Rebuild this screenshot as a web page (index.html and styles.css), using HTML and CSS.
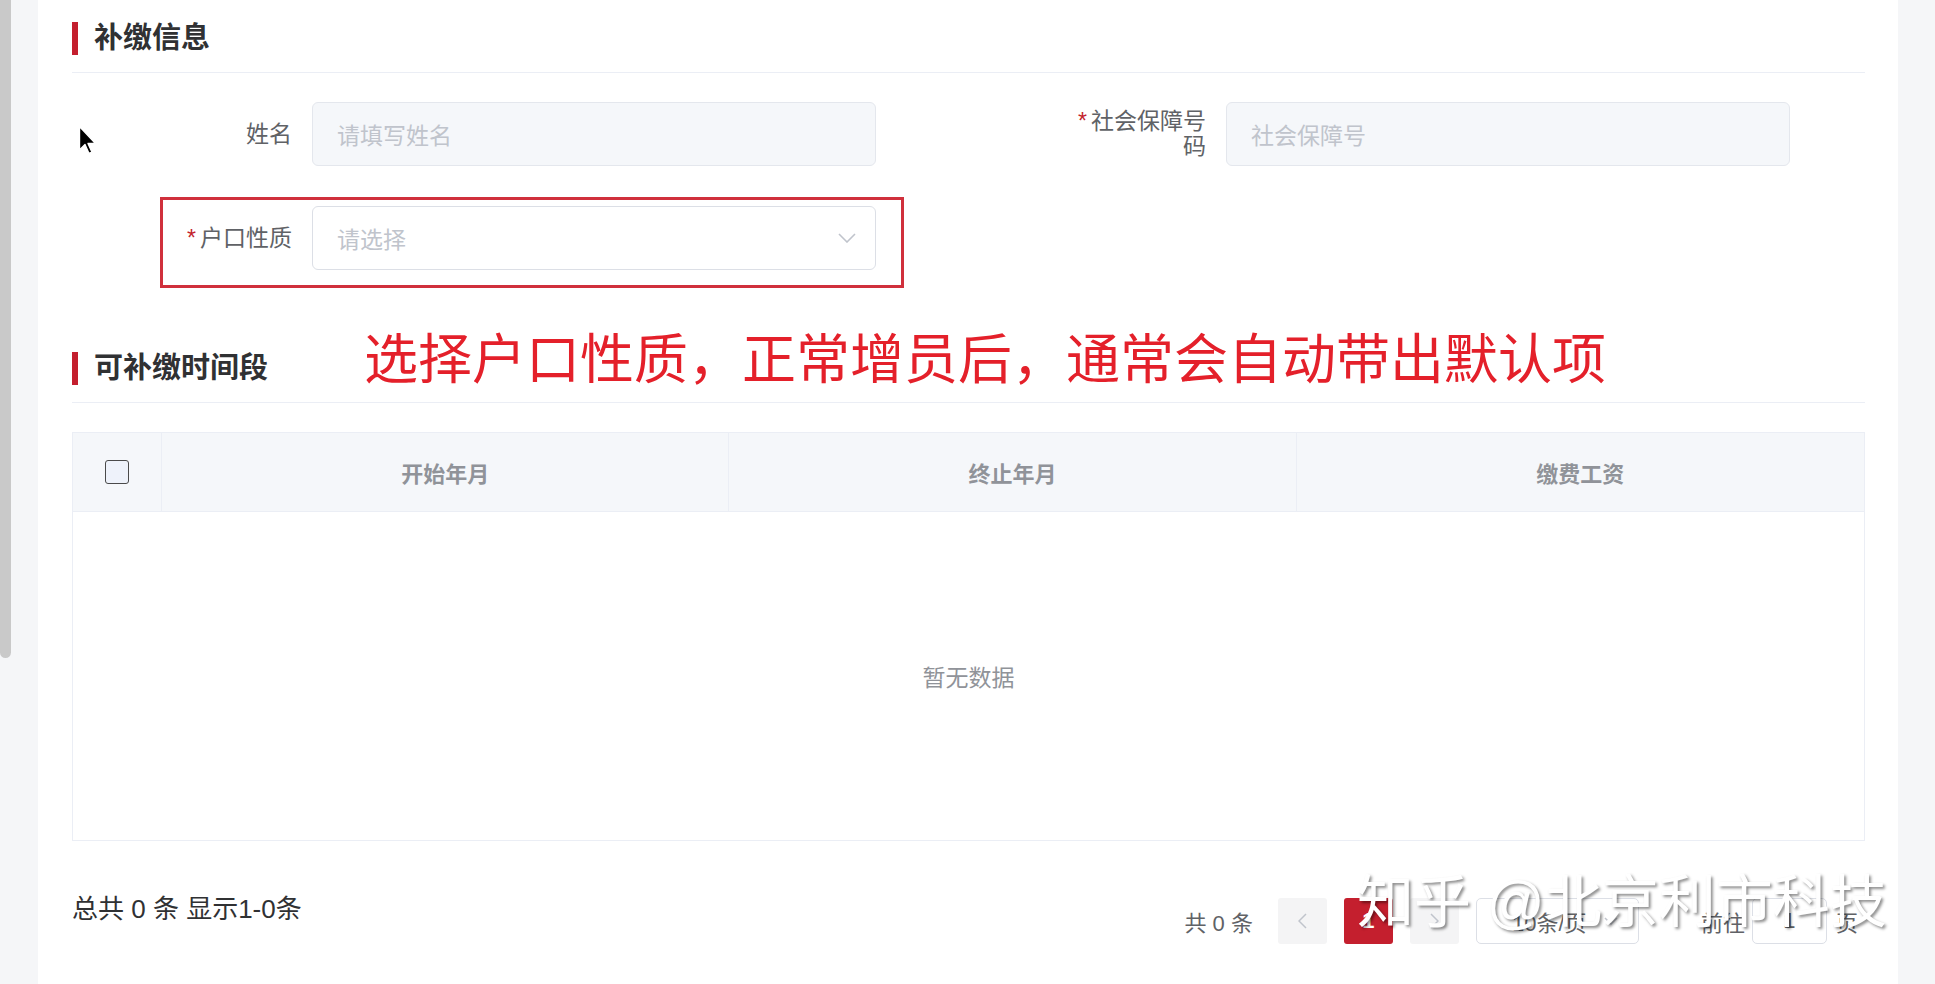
FILE: index.html
```html
<!DOCTYPE html>
<html lang="zh-CN">
<head>
  <meta charset="UTF-8" />
  <title>补缴信息</title>
  <link rel="stylesheet" href="styles.css">
</head>
<body>
  <div class="layout">
    <aside class="rail"><div class="thumb"></div></aside>

    <main class="card">
      <svg class="cursor" width="20" height="31" viewBox="0 0 20 31">
        <path d="M1.5 1.5 L1.5 25 L7 19.5 L11 28.5 L14 27.2 L10 18.5 L17.5 18.5 Z" fill="#000" stroke="#fff" stroke-width="1.4" stroke-linejoin="round"/>
      </svg>

      <section class="section">
        <h2 class="section-head">补缴信息</h2>
        <div class="form">
          <div class="form-row">
            <div class="form-item">
              <label class="form-label">姓名</label>
              <div class="input is-disabled">请填写姓名</div>
            </div>
            <div class="form-item">
              <label class="form-label required">社会保障号码</label>
              <div class="input is-disabled">社会保障号</div>
            </div>
          </div>
          <div class="form-row">
            <div class="form-item">
              <label class="form-label required">户口性质</label>
              <div class="input select">
                <span>请选择</span>
                <svg width="18" height="10" viewBox="0 0 18 10"><polyline points="1,1 9,9 17,1" fill="none" stroke="#c0c4cc" stroke-width="1.6"/></svg>
              </div>
              <div class="mark-box"></div>
            </div>
          </div>
        </div>
      </section>

      <section class="section">
        <h2 class="section-head">
          可补缴时间段
          <span class="note">选择户口性质，正常增员后，通常会自动带出默认项</span>
        </h2>

        <div class="table">
          <div class="table-head">
            <div class="th"><span class="checkbox"></span></div>
            <div class="th">开始年月</div>
            <div class="th">终止年月</div>
            <div class="th">缴费工资</div>
          </div>
          <div class="table-empty">暂无数据</div>
        </div>

        <div class="table-footer">
          <div class="total">总共 0 条 显示1-0条</div>
          <div class="pager">
            <span class="pager-total">共 0 条</span>
            <button class="pager-btn">
              <svg width="9" height="16" viewBox="0 0 9 16"><polyline points="8,1 1,8 8,15" fill="none" stroke="#c0c4cc" stroke-width="1.5"/></svg>
            </button>
            <button class="pager-btn active">1</button>
            <button class="pager-btn">
              <svg width="9" height="16" viewBox="0 0 9 16"><polyline points="1,1 8,8 1,15" fill="none" stroke="#c0c4cc" stroke-width="1.5"/></svg>
            </button>
            <div class="pager-sizes">
              <span>10条/页</span>
              <svg width="14" height="8" viewBox="0 0 14 8"><polyline points="1,1 7,7 13,1" fill="none" stroke="#c0c4cc" stroke-width="1.5"/></svg>
            </div>
            <div class="pager-jump">
              <span>前往</span>
              <div class="jump-input">1</div>
              <span>页</span>
            </div>
          </div>
        </div>
      </section>

      <div class="watermark">知乎 @北京利市科技</div>
    </main>
  </div>
</body>
</html>
```

FILE: styles.css
```css
* {
  box-sizing: border-box;
  margin: 0;
  padding: 0;
}

html, body {
  height: 100%;
  font-family: "Liberation Sans", "Noto Sans CJK SC", sans-serif;
  background: #f5f6f8;
  color: #606266;
  overflow: hidden;
}

.layout {
  display: flex;
  height: 100vh;
}

.rail {
  width: 38px;
  flex-shrink: 0;
}

.thumb {
  width: 11px;
  height: 658px;
  background: #c9c9c9;
  border-radius: 0 0 6px 6px;
}

.card {
  position: relative;
  width: 1860px;
  flex-shrink: 0;
  background: #fff;
  padding: 22px 33px 0 34px;
}

.cursor {
  position: absolute;
  left: 40px;
  top: 125px;
}

/* section titles */
.section + .section {
  margin-top: 82px;
}

.section-head {
  position: relative;
  display: flex;
  align-items: center;
  height: 51px;
  padding-bottom: 17px;
  border-bottom: 1px solid #ebeef5;
  font-size: 29px;
  line-height: 33px;
  font-weight: bold;
  color: #303133;
}

.section-head::before {
  content: "";
  width: 6px;
  height: 33px;
  background: #c41f2e;
  margin-right: 16px;
}

.note {
  position: absolute;
  left: 292px;
  top: -19px;
  font-size: 54px;
  line-height: 54px;
  font-weight: normal;
  color: #e4202a;
  white-space: nowrap;
}

/* form */
.form {
  padding: 29px 0 0 80px;
}

.form-row {
  display: flex;
  gap: 190px;
}

.form-row + .form-row {
  margin-top: 40px;
}

.form-item {
  position: relative;
  display: flex;
  align-items: center;
}

.form-label {
  width: 160px;
  padding-right: 20px;
  text-align: right;
  font-size: 23px;
  line-height: 25px;
  color: #606266;
}

.form-label.required::before {
  content: "*";
  color: #c41f2e;
  margin-right: 4px;
}

.input {
  width: 564px;
  height: 64px;
  display: flex;
  align-items: center;
  padding: 0 24px;
  border: 1px solid #dcdfe6;
  border-radius: 6px;
  background: #fff;
  font-size: 23px;
  color: #c0c4cc;
}

.input.is-disabled {
  background: #f5f7fa;
  border-color: #e4e7ed;
}

.select {
  justify-content: space-between;
  padding-right: 19px;
}

.mark-box {
  position: absolute;
  left: 8px;
  top: -9px;
  right: -28px;
  bottom: -18px;
  border: 3px solid #d0303c;
  pointer-events: none;
}

/* table */
.table {
  margin-top: 29px;
  border: 1px solid #ebeef5;
}

.table-head {
  display: grid;
  grid-template-columns: 89px 1fr 1fr 1fr;
  height: 79px;
  background: #f5f7fa;
  border-bottom: 1px solid #ebeef5;
}

.th {
  display: flex;
  align-items: center;
  justify-content: center;
  border-right: 1px solid #ebeef5;
  font-size: 22px;
  font-weight: bold;
  color: #909399;
}

.th:last-child {
  border-right: none;
}

.checkbox {
  width: 24px;
  height: 24px;
  border: 1.5px solid #4a4a4a;
  border-radius: 3px;
  background: #eef2fa;
}

.table-empty {
  height: 328px;
  display: flex;
  align-items: center;
  justify-content: center;
  font-size: 23px;
  color: #909399;
}

/* footer */
.table-footer {
  display: flex;
  justify-content: space-between;
  align-items: flex-start;
}

.total {
  margin-top: 50px;
  font-size: 26px;
  line-height: 36px;
  color: #303133;
}

.pager {
  margin-top: 57px;
  margin-right: 7px;
  display: flex;
  align-items: center;
  gap: 17px;
  height: 46px;
  font-size: 22px;
  color: #606266;
}

.pager-total {
  margin-right: 8px;
}

.pager-btn {
  width: 49px;
  height: 46px;
  display: flex;
  align-items: center;
  justify-content: center;
  border: none;
  border-radius: 3px;
  background: #f4f4f5;
  font-family: inherit;
  font-size: 22px;
  font-weight: bold;
  color: #606266;
}

.pager-btn.active {
  background: #c41f2e;
  color: #fff;
}

.pager-sizes {
  width: 163px;
  height: 46px;
  display: flex;
  align-items: center;
  justify-content: space-between;
  padding: 0 20px 0 35px;
  border: 1px solid #dcdfe6;
  border-radius: 5px;
}

.pager-jump {
  margin-left: 45px;
  display: flex;
  align-items: center;
}

.jump-input {
  width: 75px;
  height: 46px;
  margin: 0 9px 0 7px;
  display: flex;
  align-items: center;
  justify-content: center;
  border: 1px solid #dcdfe6;
  border-radius: 5px;
}

.watermark {
  position: absolute;
  left: 1319px;
  top: 874px;
  font-size: 57px;
  line-height: 57px;
  color: #fff;
  white-space: nowrap;
  text-shadow: 2px 2px 3px rgba(0, 0, 0, 0.45);
  pointer-events: none;
}
```
